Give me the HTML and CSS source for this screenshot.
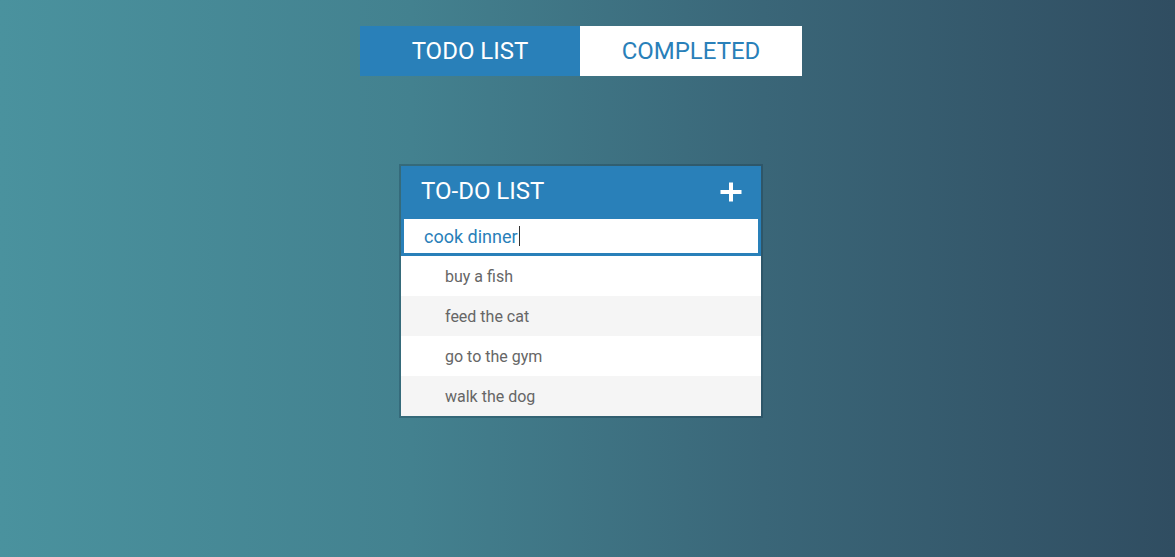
FILE: index.html
```html
<!DOCTYPE html>
<html lang="en">
<head>
<meta charset="utf-8">
<title>Todo List</title>
<link rel="stylesheet" href="styles.css">
</head>
<body>
<div class="page">
  <nav class="tabs">
    <a class="tab tab-active" href="#">TODO LIST</a>
    <a class="tab tab-completed" href="#">COMPLETED</a>
  </nav>
  <section class="card">
    <header class="card-header">
      <h1 class="card-title">TO-DO LIST</h1>
      <button class="add-btn" aria-label="Add">
        <svg width="22" height="20" viewBox="0 0 22 20"><path d="M9 0.5h4v7.5h8.5v4H13v7.5H9V12H0.5V8H9z" fill="#fff"/></svg>
      </button>
    </header>
    <div class="new-item"><span class="new-text">cook dinner</span><span class="caret"></span></div>
    <ul class="items">
      <li class="item">buy a fish</li>
      <li class="item item-alt">feed the cat</li>
      <li class="item">go to the gym</li>
      <li class="item item-alt">walk the dog</li>
    </ul>
  </section>
</div>
</body>
</html>
```

FILE: styles.css
```css
* { box-sizing: border-box; }
html, body { height: 100%; }
body {
  margin: 0;
  font-family: Roboto, "Liberation Sans", sans-serif;
  background: linear-gradient(to right, #4a929e 0%, #43818f 35%, #3a6678 65%, #304d61 100%);
  overflow: hidden;
}
.page {
  width: 1162px;
  display: flex;
  flex-direction: column;
  align-items: center;
  padding-top: 26px;
}
.tabs {
  display: flex;
  height: 50px;
}
.tab {
  display: flex;
  align-items: center;
  justify-content: center;
  font-size: 24px;
  text-decoration: none;
}
.tab-active {
  width: 220px;
  background: #2980b9;
  color: #fff;
}
.tab-completed {
  width: 222px;
  background: #fff;
  color: #2980b9;
}
.card {
  margin-top: 88px;
  width: 364px;
  border: 2px solid rgba(10, 40, 60, 0.25);
  background: #fff;
  background-clip: padding-box;
}
.card-header {
  height: 50px;
  background: #2980b9;
  display: flex;
  align-items: center;
  justify-content: space-between;
  padding: 0 19px 0 20px;
}
.card-title {
  margin: 0;
  font-size: 24px;
  font-weight: 400;
  color: #fff;
}
.add-btn {
  background: none;
  border: 0;
  padding: 0;
  display: flex;
  margin-top: 2px;
}
.new-item {
  height: 40px;
  border: 3px solid #2980b9;
  background: #fff;
  display: flex;
  align-items: center;
  padding-left: 20px;
  font-size: 18px;
  color: #2980b9;
}
.caret {
  width: 1px;
  height: 20px;
  background: #333;
  margin-left: 1px;
}
.items {
  list-style: none;
  margin: 0;
  padding: 0;
}
.item {
  height: 40px;
  display: flex;
  align-items: center;
  padding-left: 44px;
  font-size: 16px;
  color: #666;
  background: #fff;
}
.item-alt { background: #f5f5f5; }
```
